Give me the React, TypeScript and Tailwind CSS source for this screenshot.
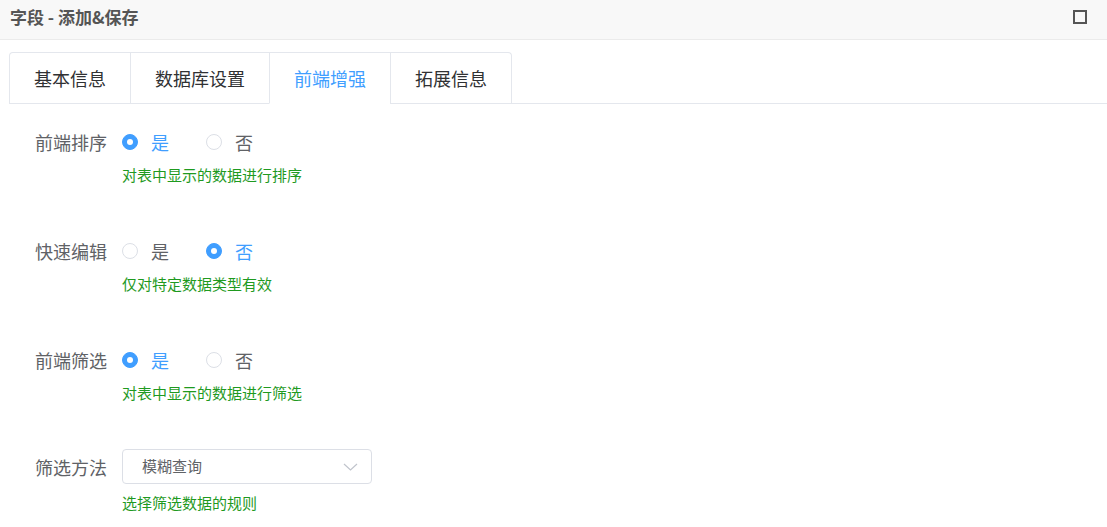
import { useState } from 'react';

const FONT = { fontFamily: '"Noto Sans CJK SC", "Noto Sans", sans-serif' };

const TABS = ['基本信息', '数据库设置', '前端增强', '拓展信息'];

function Radio({ checked, label, onClick }: { checked: boolean; label: string; onClick: () => void }) {
    return (
        <button type="button" onClick={onClick} className="flex items-center mr-[37px]">
            <span
                className={`w-[16px] h-[16px] rounded-full border flex items-center justify-center ${checked ? 'bg-[#409eff] border-[#409eff]' : 'bg-white border-[#dcdfe6]'}`}
            >
                {checked && <span className="w-[6px] h-[6px] rounded-full bg-white" />}
            </span>
            <span className={`ml-[13px] text-[18px] leading-[32px] ${checked ? 'text-[#409eff]' : 'text-[#606266]'}`}>{label}</span>
        </button>
    );
}

function RadioItem({ label, help, value, onChange }: { label: string; help: string; value: boolean; onChange: (v: boolean) => void }) {
    return (
        <div className="flex mb-[50px]">
            <div className="w-[98px] text-right text-[18px] leading-[32px] text-[#606266]">{label}</div>
            <div className="ml-[15px]">
                <div className="h-[32px] flex items-center">
                    <Radio checked={value} label="是" onClick={() => onChange(true)} />
                    <Radio checked={!value} label="否" onClick={() => onChange(false)} />
                </div>
                <div className="mt-[7px] text-[15px] leading-[20px] text-[#1f9a1f]">{help}</div>
            </div>
        </div>
    );
}

export default function App() {
    const [active, setActive] = useState(2);
    const [sortable, setSortable] = useState(true);
    const [quickEdit, setQuickEdit] = useState(false);
    const [filterable, setFilterable] = useState(true);

    return (
        <div className="w-[1107px] h-[527px] bg-white overflow-hidden" style={FONT}>
            {/* header */}
            <div className="h-[40px] bg-[#f8f8f8] border-b border-[#ebebeb] flex items-center justify-between pl-[10px] pr-[20px] pb-[5px]">
                <span className="text-[17px] font-bold text-[#555]">字段 - 添加&amp;保存</span>
                <span className="w-[14px] h-[14px] border-2 border-[#555]" />
            </div>

            <div className="pl-[9px] pt-[12px]">
                {/* tabs */}
                <div className="flex border-b border-[#e4e7ed]">
                    <div className="flex border border-b-0 border-[#e4e7ed] rounded-t-[4px]">
                        {TABS.map((t, i) => (
                            <button
                                key={t}
                                type="button"
                                onClick={() => setActive(i)}
                                className={`h-[51px] -mb-px px-[24px] text-[18px] border-b ${i > 0 ? 'border-l border-l-[#e4e7ed]' : ''} ${i === active ? 'text-[#409eff] border-b-white' : 'text-[#303133] border-b-[#e4e7ed]'}`}
                            >
                                {t}
                            </button>
                        ))}
                    </div>
                </div>

                {/* form */}
                <div className="pt-[22px]">
                    <RadioItem label="前端排序" help="对表中显示的数据进行排序" value={sortable} onChange={setSortable} />
                    <RadioItem label="快速编辑" help="仅对特定数据类型有效" value={quickEdit} onChange={setQuickEdit} />
                    <div className="-mb-[4px]">
                        <RadioItem label="前端筛选" help="对表中显示的数据进行筛选" value={filterable} onChange={setFilterable} />
                    </div>

                    <div className="flex">
                        <div className="w-[98px] text-right text-[18px] leading-[36px] text-[#606266]">筛选方法</div>
                        <div className="ml-[15px]">
                            <div className="w-[250px] h-[35px] border border-[#dcdfe6] rounded-[4px] flex items-center justify-between pl-[19px] pr-[13px]">
                                <span className="text-[15px] text-[#606266]">模糊查询</span>
                                <svg width="15" height="8" viewBox="0 0 15 8" fill="none">
                                    <path d="M1 1l6.5 6L14 1" stroke="#c0c4cc" strokeWidth="1.2" />
                                </svg>
                            </div>
                            <div className="mt-[9px] text-[15px] leading-[20px] text-[#1f9a1f]">选择筛选数据的规则</div>
                        </div>
                    </div>
                </div>
            </div>
        </div>
    );
}
